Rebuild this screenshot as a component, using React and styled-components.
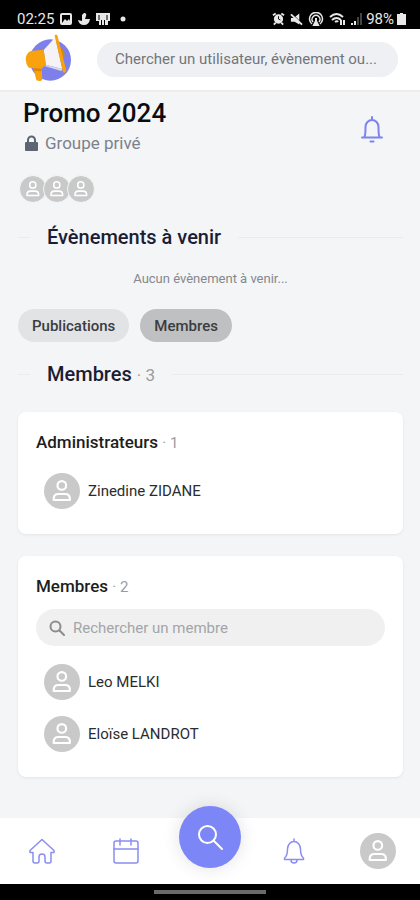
import { useState } from "react";
import styled, { createGlobalStyle } from "styled-components";

const GlobalStyle = createGlobalStyle`
  *, *::before, *::after {
    box-sizing: border-box;
  }

  body {
    margin: 0;
    background: #f3f5f7;
    color: #202124;
    font-family: Roboto, "Noto Sans", sans-serif;
  }

  button, input {
    font: inherit;
  }

  h1, h2, h3, p, ul {
    margin: 0;
    padding: 0;
  }
`;

const Page = styled.div`
  min-height: 100vh;
  display: flex;
  flex-direction: column;
`;

const StatusBar = styled.div`
  display: flex;
  align-items: center;
  justify-content: space-between;
  height: 29px;
  padding: 8px 14px 0 17px;
  background: #000;
  color: #e8e8e8;
  font-size: 15px;
  line-height: 20px;
`;

const StatusGroup = styled.div`
  display: flex;
  align-items: center;
  gap: ${({ $gap }) => $gap}px;
`;

const StatusIcon = styled.svg`
  width: ${({ $width }) => $width || 14}px;
  height: 14px;
  fill: none;
  stroke: #e8e8e8;
  stroke-width: 2;
`;

const Header = styled.header`
  display: flex;
  align-items: center;
  gap: 22px;
  height: 63px;
  padding: 0 22px 0 25px;
  background: #fff;
  border-bottom: 2px solid #ededee;
`;

const LogoLink = styled.a`
  display: flex;
  flex: none;
`;

const LogoSvg = styled.svg`
  width: 50px;
  height: 50px;
  overflow: visible;
`;

const GlobalSearch = styled.input`
  flex: 1;
  min-width: 0;
  height: 35px;
  padding: 0 16px 2px 18px;
  border: none;
  outline: none;
  border-radius: 18px;
  background: #eff0f3;
  font-size: 15px;
  text-overflow: ellipsis;

  &::placeholder {
    color: #72757b;
    opacity: 1;
  }
`;

const Main = styled.main`
  flex: 1;
  display: flex;
  flex-direction: column;
  padding: 5px 17px 40px 18px;
`;

const GroupHeader = styled.section`
  display: flex;
  justify-content: space-between;
  align-items: center;
  padding: 0 18px 0 5px;
`;

const Title = styled.h1`
  font-size: 26px;
  line-height: 32px;
  font-weight: 500;
  color: #0c0c10;
`;

const Privacy = styled.p`
  display: flex;
  align-items: center;
  gap: 6px;
  margin-top: 2px;
  font-size: 17px;
  line-height: 24px;
  color: #7c818c;
`;

const LockSvg = styled.svg`
  width: 16px;
  height: 16px;
`;

const IconButton = styled.button`
  display: flex;
  padding: 8px 0 0;
  border: none;
  background: none;
  color: #7d84f2;
  cursor: pointer;
`;

const LineIcon = styled.svg`
  width: 26px;
  height: 28px;
  fill: none;
  stroke: currentColor;
  stroke-width: ${({ $stroke }) => $stroke || 1};
  stroke-linejoin: round;
  stroke-linecap: round;
`;

const AvatarCircle = styled.span`
  display: flex;
  flex: none;
  align-items: center;
  justify-content: center;
  width: ${({ $size }) => $size}px;
  height: ${({ $size }) => $size}px;
  border-radius: 50%;
  background: #c9c9c9;

  svg {
    width: 60%;
    height: 60%;
    fill: none;
    stroke: #fff;
    stroke-width: 2;
    stroke-linejoin: round;
  }
`;

const AvatarStack = styled.div`
  display: flex;
  margin: 20px 0 0 1px;

  ${AvatarCircle} {
    border: 1px solid #f3f5f7;
  }

  ${AvatarCircle} + ${AvatarCircle} {
    margin-left: -4px;
  }
`;

const Divider = styled.div`
  display: flex;
  align-items: center;
  gap: 17px;
  margin-top: ${({ $top }) => $top}px;

  &::before,
  &::after {
    content: "";
    height: 1px;
    background: #e9ebed;
  }

  &::before {
    width: 12px;
  }

  &::after {
    flex: 1;
  }
`;

const SectionTitle = styled.h2`
  font-size: 20px;
  line-height: 24px;
  font-weight: 500;
  color: #1b1d33;
`;

const Count = styled.span`
  font-size: ${({ $size }) => $size}px;
  font-weight: 400;
  color: #9a9ca1;
`;

const Empty = styled.p`
  margin-top: 20px;
  text-align: center;
  font-size: 13px;
  line-height: 20px;
  color: #85888e;
`;

const Tabs = styled.div`
  display: flex;
  gap: 11px;
  margin-top: 20px;
`;

const Tab = styled.button`
  height: 33px;
  padding: 0 14px;
  border: none;
  border-radius: 17px;
  background: ${({ $active }) => ($active ? "#bfc0c1" : "#e2e3e4")};
  color: #3b3c3f;
  font-size: 15px;
  font-weight: 500;
  cursor: pointer;
`;

const Cards = styled.div`
  display: flex;
  flex-direction: column;
  gap: 22px;
  margin-top: 25px;
`;

const Card = styled.section`
  display: flex;
  flex-direction: column;
  gap: 10px;
  padding: 18px 18px 17px;
  border-radius: 8px;
  background: #fff;
  box-shadow: 0 1px 3px rgba(0, 0, 0, 0.07);
`;

const CardTitle = styled.h3`
  font-size: 17px;
  line-height: 24px;
  font-weight: 500;
  color: #1d1e20;
`;

const MemberSearch = styled.label`
  display: flex;
  align-items: center;
  gap: 8px;
  height: 37px;
  padding: 0 13px;
  border-radius: 19px;
  background: #f0f0f0;

  svg {
    flex: none;
    width: 16px;
    height: 16px;
    fill: none;
    stroke: #8c8c8c;
    stroke-width: 2;
    stroke-linecap: round;
  }

  input {
    flex: 1;
    min-width: 0;
    padding: 0;
    border: none;
    outline: none;
    background: none;
    font-size: 15px;
  }

  input::placeholder {
    color: #a3a5a9;
    opacity: 1;
  }
`;

const MemberList = styled.ul`
  list-style: none;
`;

const Member = styled.li`
  display: flex;
  align-items: center;
  gap: 8px;
  padding: 8px;
  font-size: 15px;
  color: #2b2c2e;
`;

const BottomNav = styled.nav`
  display: grid;
  grid-template-columns: repeat(5, 1fr);
  grid-template-rows: 66px;
  place-items: center;
  background: #fff;
`;

const NavLink = styled.a`
  display: flex;
  color: #8a8df0;
`;

/* the bottom margin lifts the button above the bar */
const SearchFab = styled.button`
  display: flex;
  align-items: center;
  justify-content: center;
  width: 62px;
  height: 62px;
  margin-bottom: 28px;
  padding: 0;
  border: none;
  border-radius: 50%;
  background: #7c86f7;
  color: #fff;
  box-shadow: 0 0 18px rgba(0, 0, 0, 0.12);
  cursor: pointer;
`;

const SystemBar = styled.div`
  display: flex;
  justify-content: center;
  align-items: center;
  height: 16px;
  background: #000;

  &::after {
    content: "";
    width: 112px;
    height: 4px;
    background: #6a6a6a;
  }
`;

function Avatar({ size }) {
  return (
    <AvatarCircle $size={size}>
      <svg viewBox="0 0 20 20" aria-hidden="true">
        <circle cx="10" cy="5" r="4" />
        <path d="M2.5 18.500v-1c0-3 2-4.500 4.500-4.500h6c2.500 0 4.500 1.500 4.500 4.500v1z" />
      </svg>
    </AvatarCircle>
  );
}

function Logo() {
  return (
    <LogoSvg viewBox="75 105 150 150" aria-hidden="true">
      <circle cx="151" cy="180" r="62" fill="#7d80ea" />
      <path d="M131 150 166 112 187 207 137 194z" fill="#f5f3f6" />
      <path d="M137 194 187 207 184 213 136 199z" fill="#d9d8e8" />
      <path d="M77 176q2-17 15-23l39-4 7 45-13 12 2 33q-4 7-18 2l-9-37-14-1q-9-12-9-27z" fill="#f8a20d" />
      <path d="M100 204l25 2-1 8-21-1z" fill="#dc8604" />
      <path d="M172 134q22 12 22 32l-8 17z" fill="#dc8604" />
      <path d="M164 107q3-6 8-1l27 106q-2 9-10 5z" fill="#f8a20d" />
    </LogoSvg>
  );
}

function StatusIcons() {
  return (
    <StatusGroup $gap={5}>
      <StatusIcon $width={13} viewBox="0 0 14 14" aria-hidden="true">
        <circle cx="7" cy="7" r="4" fill="#e8e8e8" />
        <path d="M1 3l3-2M13 3l-3-2M2 13l2-2M12 13l-2-2" />
        <path d="M7 4v3l2 1" stroke="#000" strokeWidth="1" />
      </StatusIcon>
      <StatusIcon $width={13} viewBox="0 0 14 14" aria-hidden="true">
        <path d="M1 6h3l6-5v12L5 10H1z" fill="#e8e8e8" stroke="none" />
        <path d="M2 1l11 11" stroke="#000" strokeWidth="1" />
        <path d="M1 2l12 11" />
      </StatusIcon>
      <StatusIcon $width={16} viewBox="0 0 16 14" aria-hidden="true">
        <path d="M4 12a6.5 6.5 0 1 1 8 0M5 10a4 4 0 1 1 6 0" strokeWidth="1.5" />
        <path d="M8 6v3M6 13l2-4 2 4z" fill="#e8e8e8" />
      </StatusIcon>
      <StatusIcon $width={17} viewBox="0 0 17 14" aria-hidden="true">
        <path d="M1 5q6.5-6 13 0M3 8q4.5-4 9 0M6 10q2-1.5 3 0" />
        <path d="M12 8v5M15 8v5" />
      </StatusIcon>
      <StatusIcon $width={12} viewBox="0 0 12 14" aria-hidden="true">
        <path d="M1 13v-2M4 13V9" />
        <path d="M7 13V5M10 13V1" stroke="#444" />
      </StatusIcon>
    </StatusGroup>
  );
}

const SearchGlyph = () => (
  <svg viewBox="0 0 16 16" aria-hidden="true">
    <circle cx="6.5" cy="6.5" r="5" />
    <path d="M10.5 10.5 15 15" />
  </svg>
);

const admins = ["Zinedine ZIDANE"];
const members = ["Leo MELKI", "Eloïse LANDROT"];

function Members({ names }) {
  return (
    <MemberList>
      {names.map((name) => (
        <Member key={name}>
          <Avatar size={36} />
          {name}
        </Member>
      ))}
    </MemberList>
  );
}

export default function App() {
  const [tab, setTab] = useState("Membres");
  const [query, setQuery] = useState("");
  const found = members.filter((m) => m.toLowerCase().includes(query.toLowerCase()));

  return (
    <Page>
      <GlobalStyle />
      <StatusBar>
        <StatusGroup $gap={6}>
          <span>02:25</span>
          <StatusIcon $width={12} viewBox="0 0 12 14" aria-hidden="true">
            <rect x="1" y="2" width="10" height="10" rx="1" />
            <path d="M2 11l3-4 2 2 2-2 2 4z" fill="#e8e8e8" stroke="none" />
          </StatusIcon>
          <StatusIcon $width={12} viewBox="0 0 12 14" aria-hidden="true">
            <path d="M6 1a2 2 0 0 1 2 3L7 7l5 0q-1 6-6 6T0 8l4 1V3z" fill="#e8e8e8" stroke="none" />
          </StatusIcon>
          <StatusIcon viewBox="0 0 14 14" aria-hidden="true">
            <path d="M0 1h14v8h-2v4H9V8H8v5H6V8H5v5H3V9H0z" fill="#e8e8e8" stroke="none" />
            <path d="M3 3v5M11 3v5" stroke="#000" strokeWidth="1" />
          </StatusIcon>
          <StatusIcon viewBox="0 0 14 14" aria-hidden="true">
            <circle cx="7" cy="7" r="2.5" fill="#e8e8e8" stroke="none" />
          </StatusIcon>
        </StatusGroup>
        <StatusGroup $gap={3}>
          <StatusIcons />
          <span>98%</span>
          <StatusIcon $width={9} viewBox="0 0 9 14" aria-hidden="true">
            <path d="M3 1h3v1h3v11H0V2h3z" fill="#e8e8e8" stroke="none" />
          </StatusIcon>
        </StatusGroup>
      </StatusBar>

      <Header>
        <LogoLink href="#accueil" aria-label="Accueil">
          <Logo />
        </LogoLink>
        <GlobalSearch
          type="text"
          aria-label="Recherche"
          placeholder="Chercher un utilisateur, évènement ou..."
        />
      </Header>

      <Main>
        <GroupHeader>
          <div>
            <Title>Promo 2024</Title>
            <Privacy>
              <LockSvg viewBox="0 0 16 16" aria-hidden="true">
                <path d="M5 8V5a3.5 3.5 0 0 1 7 0v3" fill="none" stroke="#5d6472" strokeWidth="2" />
                <rect x="2" y="7" width="13" height="9" rx="1" fill="#5d6472" />
              </LockSvg>
              Groupe privé
            </Privacy>
          </div>
          <IconButton type="button" aria-label="Notifications du groupe">
            <LineIcon $stroke={2} viewBox="0 0 26 28" aria-hidden="true">
              <path d="M13 1v2M3 21.500h20M5.500 21q1-2 1-10a6.500 7 0 0 1 13 0q0 8 1 10" />
              <path d="M11.500 25.500h3" />
            </LineIcon>
          </IconButton>
        </GroupHeader>
        <AvatarStack>
          <Avatar size={28} />
          <Avatar size={28} />
          <Avatar size={28} />
        </AvatarStack>

        <Divider $top={22}>
          <SectionTitle>Évènements à venir</SectionTitle>
        </Divider>
        <Empty>Aucun évènement à venir...</Empty>

        <Tabs>
          {["Publications", "Membres"].map((name) => (
            <Tab key={name} type="button" $active={tab === name} onClick={() => setTab(name)}>
              {name}
            </Tab>
          ))}
        </Tabs>

        <Divider $top={20}>
          <SectionTitle>
            Membres <Count $size={17}>· 3</Count>
          </SectionTitle>
        </Divider>

        <Cards>
          <Card>
            <CardTitle>
              Administrateurs <Count $size={15}>· 1</Count>
            </CardTitle>
            <Members names={admins} />
          </Card>
          <Card>
            <CardTitle>
              Membres <Count $size={15}>· 2</Count>
            </CardTitle>
            <MemberSearch>
              <SearchGlyph />
              <input
                type="text"
                aria-label="Rechercher un membre"
                placeholder="Rechercher un membre"
                value={query}
                onChange={(e) => setQuery(e.target.value)}
              />
            </MemberSearch>
            <Members names={found} />
          </Card>
        </Cards>
      </Main>

      <BottomNav>
        <NavLink href="#accueil" aria-label="Accueil">
          <LineIcon viewBox="0 0 26 28" $stroke={1.5} aria-hidden="true">
            <path d="M13 2.5 1 13.5v2h3V24q0 2 2 2h2q2 0 2-2v-4q0-3 3-3t3 3v4q0 2 2 2h2q2 0 2-2v-8.5h3v-2z" />
          </LineIcon>
        </NavLink>
        <NavLink href="#agenda" aria-label="Agenda">
          <LineIcon viewBox="0 0 26 28" $stroke={1.5} aria-hidden="true">
            <rect x="1" y="4" width="24" height="22" rx="2" />
            <path d="M1 12h24M7 2v6M18 2v6" />
          </LineIcon>
        </NavLink>
        <SearchFab type="button" aria-label="Rechercher">
          <LineIcon viewBox="0 0 26 28" $stroke={2} aria-hidden="true">
            <circle cx="10.5" cy="11.5" r="8.5" />
            <path d="M16.5 17.5 25 26" />
          </LineIcon>
        </SearchFab>
        <NavLink href="#notifications" aria-label="Notifications">
          <LineIcon viewBox="0 0 26 28" $stroke={1.5} aria-hidden="true">
            <path d="M13 2v2M3.5 22.5V21q3-2 3-9a6.5 7.5 0 0 1 13 0q0 7 3 9v1.5zM10 23q0 3 3 3t3-3" />
          </LineIcon>
        </NavLink>
        <NavLink href="#profil" aria-label="Profil">
          <Avatar size={36} />
        </NavLink>
      </BottomNav>
      <SystemBar />
    </Page>
  );
}
